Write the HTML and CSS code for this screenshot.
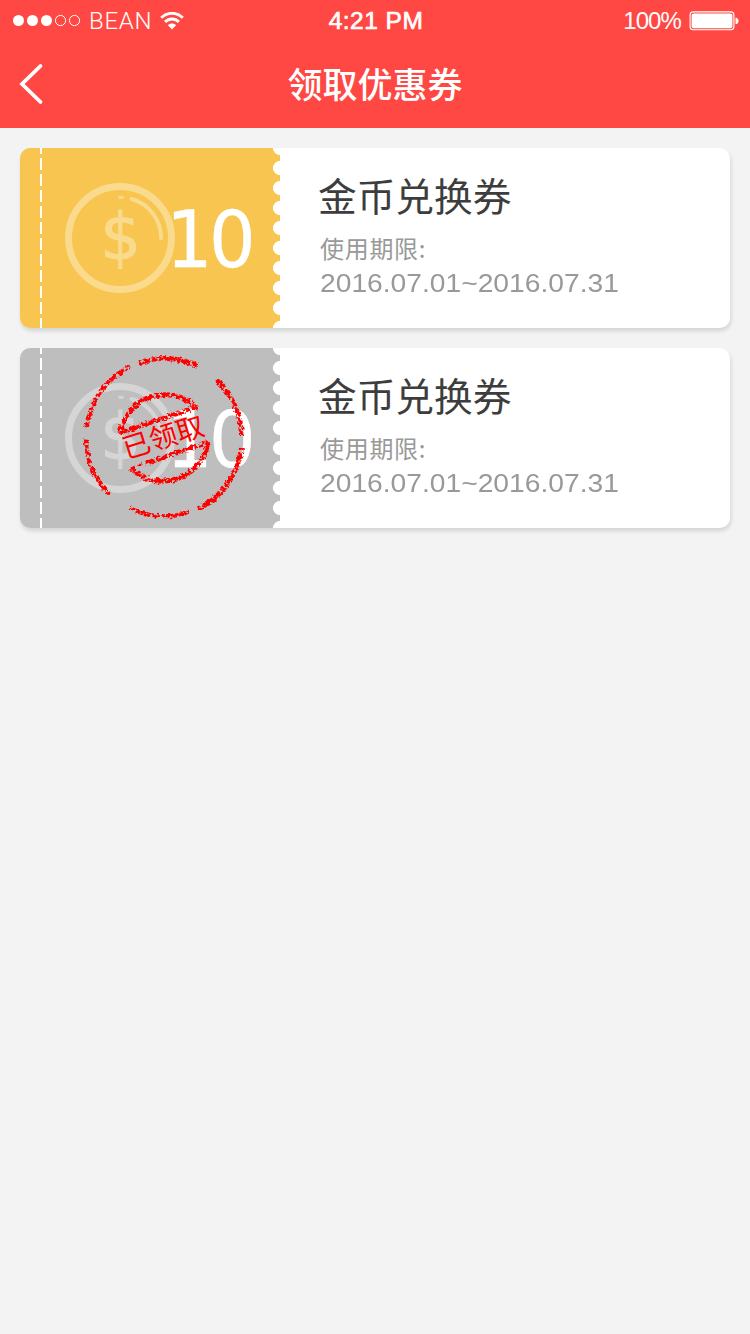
FILE: index.html
```html
<!DOCTYPE html>
<html lang="zh-CN">
<head>
<meta charset="utf-8">
<title>领取优惠券</title>
<link rel="stylesheet" href="styles.css">
</head>
<body>
<header class="header">
  <div class="status">
    <div class="status-left">
      <svg class="signal" width="68" height="14" viewBox="0 0 68 14"><g fill="#fff"><circle cx="5.5" cy="6.500" r="5.5"/><circle cx="19.5" cy="6.500" r="5.5"/><circle cx="33.5" cy="6.500" r="5.5"/></g><g fill="none" stroke="#fff"><circle cx="47.5" cy="6.500" r="5.1"/><circle cx="61.5" cy="6.500" r="5.1"/></g></svg>
      <span class="carrier">BEAN</span>
      <svg class="wifi" width="24" height="18" viewBox="0 0 24 18"><g fill="none" stroke="#fff" stroke-width="2.900"><path d="M1.200 5.700C7.500 -.2 16.500 -.2 22.800 5.700"/><path d="M5 9.900C9 6 15 6 19 9.900"/></g><path d="M7.900 13.200C10 11 14 11 16.100 13.200L12 17.600Z" fill="#fff"/></svg>
    </div>
    <span class="clock">4:21 PM</span>
    <div class="status-right">
      <span class="percent">100%</span>
      <svg width="50" height="20" viewBox="0 0 50 20"><rect x="1.100" y=".9" width="43.800" height="17.800" rx="3" fill="none" stroke="#fff" stroke-width="1.100"/><rect x="2.600" y="2.400" width="40.800" height="14.800" rx="2" fill="#fff"/><path d="M46.500 6.500q3 .6 3 3.400t-3 3.400z" fill="#fff"/></svg>
    </div>
  </div>
  <nav class="nav">
    <svg class="back" width="26" height="44" viewBox="0 0 26 44"><path d="M21.500 4L3 22L21.500 40" fill="none" stroke="#fff" stroke-width="3.800" stroke-linecap="round" stroke-linejoin="miter"/></svg>
    <h1 class="title">领取优惠券</h1>
  </nav>
</header>
<main class="list">
  <article class="coupon">
    <div class="stub">
      <svg class="coin" width="110" height="110" viewBox="0 0 110 110"><g fill="none" stroke="currentColor"><circle cx="55" cy="55" r="51.500" stroke-width="7"/><path d="M66.500 16A40 40 0 0 1 96 55" stroke-width="4" stroke-linecap="round"/><path d="M53.500 14.300H58.500" stroke-width="3"/></g><text class="dollar" x="55.500" y="76" text-anchor="middle">$</text></svg>
      <span class="amount">10</span>
    </div>
    <div class="info">
      <h2 class="name">金币兑换券</h2>
      <p class="label">使用期限:</p>
      <p class="dates">2016.07.01~2016.07.31</p>
    </div>
  </article>
  <article class="coupon claimed">
    <div class="stub">
      <svg class="coin" width="110" height="110" viewBox="0 0 110 110"><g fill="none" stroke="currentColor"><circle cx="55" cy="55" r="51.500" stroke-width="7"/><path d="M66.500 16A40 40 0 0 1 96 55" stroke-width="4" stroke-linecap="round"/><path d="M53.500 14.300H58.500" stroke-width="3"/></g><text class="dollar" x="55.500" y="76" text-anchor="middle">$</text></svg>
      <span class="amount">10</span>
      <svg class="stamp" width="170" height="170" viewBox="79 352 170 170">
        <defs><filter id="worn" x="-10%" y="-10%" width="120%" height="120%"><feTurbulence type="fractalNoise" baseFrequency=".3" numOctaves="3" seed="7" result="n"/><feDisplacementMap in="SourceGraphic" in2="n" scale="5" xChannelSelector="R" yChannelSelector="G" result="d"/><feColorMatrix in="n" type="matrix" values="0 0 0 0 0  0 0 0 0 0  0 0 0 0 0  0 0 -7 0 4.700" result="m"/><feComposite in="d" in2="m" operator="in"/></filter></defs>
        <g fill="none" stroke="#ff0000" stroke-width="5" filter="url(#worn)">
          <path d="M139 363A79 79 0 0 1 199 366.500"/><path d="M216.500 380A79 79 0 0 1 241.500 435"/><path d="M241.500 448A79 79 0 0 1 197 509.500"/><path d="M188 512.500A79 79 0 0 1 129.500 508" stroke-width="4"/><path d="M110 494.500A79 79 0 0 1 86 439.500" stroke-width="4.200"/><path d="M86.500 427.500A79 79 0 0 1 130 366.500" stroke-width="4.400"/>
          <path d="M119 433L197 407"/><path d="M120 433A45.500 45.500 0 0 1 196 407" stroke-width="5"/>
          <path d="M147 463L209 442" stroke-width="4.800"/><path d="M130 468.500L150 462" stroke-width="2.400" stroke-dasharray="5 3"/><path d="M131 468A45.500 45.500 0 0 0 208 442" stroke-width="5.200"/>
        </g>
        <text class="stamp-text" x="0" y="0" transform="translate(126 459) rotate(-17)">已领取</text>
      </svg>
    </div>
    <div class="info">
      <h2 class="name">金币兑换券</h2>
      <p class="label">使用期限:</p>
      <p class="dates">2016.07.01~2016.07.31</p>
    </div>
  </article>
</main>
</body>
</html>
```
FILE: styles.css
```css
* { box-sizing: border-box; margin: 0; padding: 0; }
body { background: #f3f3f3; font-family: "Liberation Sans", "Noto Sans CJK SC", sans-serif; }
svg { display: block; flex: none; }
.header { height: 128px; background: #ff4743; color: #fff; }
.status { height: 40px; display: grid; grid-template-columns: 1fr auto 1fr; align-items: center; padding: 0 11px 0 13px; }
.status-left, .status-right { display: flex; align-items: center; }
.status-right { justify-content: flex-end; gap: 8px; }
.carrier { font: 300 24px/40px Roboto, sans-serif; margin: 0 8px 0 8px; letter-spacing: .7px; }
.clock { font: 400 24.5px/42px "Liberation Sans", sans-serif; letter-spacing: .5px; -webkit-text-stroke: .7px #fff; }
.percent { font: 400 24px/42px "Liberation Sans", sans-serif; letter-spacing: -.9px; }
.nav { height: 88px; display: grid; grid-template-columns: 60px 1fr 60px; align-items: center; padding-left: 19px; padding-right: 19px; }
.title { text-align: center; font: 500 35px/86px "Noto Sans CJK SC", sans-serif; padding-bottom: 2px; }
.list { display: flex; flex-direction: column; gap: 20px; padding: 20px; }
.coupon { display: flex; height: 180px; border-radius: 10px; background: #fff; box-shadow: 1px 3px 4px rgba(0,0,0,.13); }
.stub { --tint: #f7c550; position: relative; display: flex; align-items: center; width: 260px; padding-left: 45px; color: #fada8d; border-radius: 10px 0 0 10px;
  background:
    radial-gradient(circle at 7px 0, #fff 6.700px, transparent 7.300px) right 0 / 7px 20px repeat-y,
    radial-gradient(circle at 7px 20px, #fff 6.700px, transparent 7.300px) right 0 / 7px 20px repeat-y,
    repeating-linear-gradient(to bottom, #fff 0 12px, transparent 12px 16px) 20px -6px / 2px 192px no-repeat,
    var(--tint);
}
.claimed .stub { --tint: #bebebe; color: #d5d5d5; }
.dollar { font: 400 64px "DejaVu Sans", sans-serif; fill: currentColor; stroke: currentColor; stroke-width: 1px; }
.amount { color: #fff; font: 400 78px/180px "DejaVu Sans", sans-serif; margin-left: -9px; padding-top: 3px; letter-spacing: -4px; transform: scaleX(.94); transform-origin: left; -webkit-text-stroke: .4px #fff; }
.stamp { position: absolute; left: 59px; top: 4px; }
.stamp-text { font: 400 28px "Noto Sans CJK SC", sans-serif; fill: #ff0000; }
.info { padding: 18px 0 0 38px; white-space: nowrap; }
.name { color: #3d3d3d; font: 400 38.7px/56px "Noto Sans CJK SC", sans-serif; }
.label { color: #999; font: 400 24px/30px "Noto Sans CJK SC", sans-serif; margin: 11px 0 0 2px; letter-spacing: .7px; }
.dates { color: #999; font-size: 26px; line-height: 38px; margin: 1px 0 0 2px; transform: scaleX(1.085); transform-origin: left; }
```
